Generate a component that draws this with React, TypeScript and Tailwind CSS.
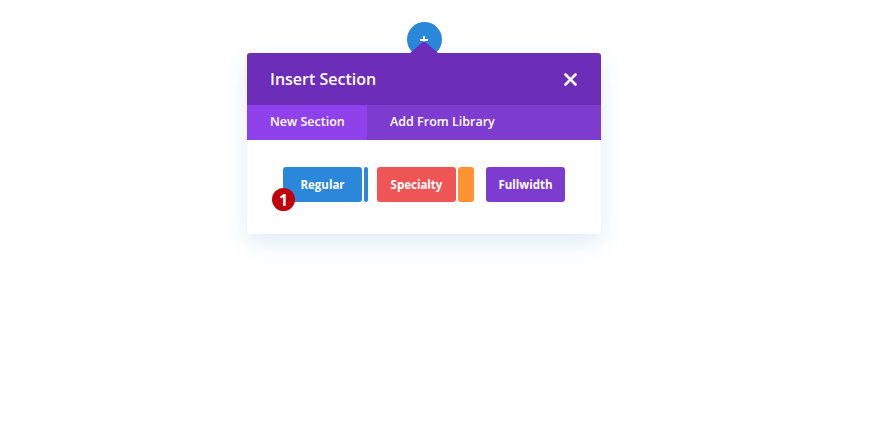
import React from 'react';

const TABS = [
  { label: 'New Section', active: true },
  { label: 'Add From Library', active: false },
];

export default function App() {
  return (
    <div
      className="w-full h-[435px] bg-white pt-[22px] pl-[247px]"
      style={{ fontFamily: '"Open Sans", "Noto Sans", sans-serif' }}
    >
      <div className="w-[354px] flex flex-col items-center">
        {/* Add button */}
        <div className="w-[35px] h-[35px] rounded-full bg-[#2b87da] -mb-[4px] flex justify-center pt-[14px]">
          <div className="relative w-[8px] h-[8px]">
            <div className="absolute left-[3px] top-0 w-[2px] h-[8px] bg-white" />
            <div className="absolute left-0 top-[3px] w-[8px] h-[2px] bg-white" />
          </div>
        </div>

        {/* Modal */}
        <div className="relative w-[354px] bg-white rounded-[3px] shadow-[0_8px_22px_rgba(43,135,218,0.16)]">
          <div className="absolute -top-[12px] left-1/2 -translate-x-1/2 w-0 h-0 border-l-[14px] border-r-[14px] border-b-[12px] border-l-transparent border-r-transparent border-b-[#6c2eb9]" />

          <div className="h-[52px] bg-[#6c2eb9] rounded-t-[3px] flex items-center justify-between pl-[23px] pr-[23px]">
            <span className="text-white text-[16px] font-semibold">Insert Section</span>
            <svg width="13" height="13" viewBox="0 0 13 13" className="mr-[1px]">
              <path d="M1.5 1.5l10 10M11.5 1.5l-10 10" stroke="white" strokeWidth="2.6" strokeLinecap="round" />
            </svg>
          </div>

          <div className="h-[35px] bg-[#7e3bd0] flex">
            {TABS.map((tab) => (
              <div
                key={tab.label}
                className={`px-[23px] flex items-center whitespace-nowrap text-white text-[12.5px] font-semibold ${
                  tab.active ? 'w-[120px] bg-[#8f42ec]' : ''
                }`}
              >
                {tab.label}
              </div>
            ))}
          </div>

          <div className="pt-[27px] pb-[32px] flex justify-center">
            <div className="flex items-stretch h-[35px] text-white text-[11.5px] font-bold">
              <div className="relative w-[79px] bg-[#2b87da] rounded-[3px] flex items-center justify-center">
                Regular
                <div className="absolute -left-[11px] top-[21px] w-[23px] h-[23px] rounded-full bg-[#c0000a] flex items-center justify-center text-[16px] font-bold leading-none">
                  1
                </div>
              </div>
              <div className="w-[4px] ml-[2px] bg-[#2b87da] rounded-[2px]" />

              <div className="w-[79px] ml-[9px] bg-[#ef5555] rounded-[3px] flex items-center justify-center">
                Specialty
              </div>
              <div className="w-[16px] ml-[2px] bg-[#ff9232] rounded-[3px]" />

              <div className="w-[79px] ml-[12px] bg-[#7e3bd0] rounded-[3px] flex items-center justify-center">
                Fullwidth
              </div>
            </div>
          </div>
        </div>
      </div>
    </div>
  );
}
